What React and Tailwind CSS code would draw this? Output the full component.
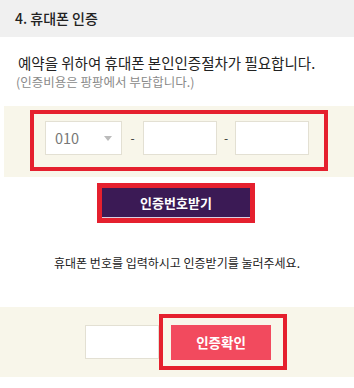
const font = { fontFamily: '"Noto Sans CJK KR", "Noto Sans", sans-serif' };

const PhoneBox = ({ className = '' }) => (
  <div className={`h-[34px] bg-white border border-[#e3e0d3] ${className}`} />
);

export default function App() {
  return (
    <div className="w-[354px] h-[388px] bg-white text-[#222] overflow-hidden" style={font}>
      {/* 헤더 */}
      <div className="h-[37px] bg-[#f0f0f0] px-[15px] flex items-center text-[14px] font-medium">
        4. 휴대폰 인증
      </div>

      {/* 안내문 */}
      <div className="pt-[16px] pl-[18px]">
        <p className="text-[14.5px] leading-[20px] text-[#222]">예약을 위하여 휴대폰 본인인증절차가 필요합니다.</p>
        <p className="-ml-[2px] text-[12.5px] leading-[18px] text-[#8a8a8a]">(인증비용은 팡팡에서 부담합니다.)</p>
      </div>

      {/* 번호 입력 */}
      <div className="mt-[15px] ml-[4px] h-[71px] bg-[#f8f6ea] pt-[4px]">
        <div className="ml-[26px] w-[298px] h-[61px] border-4 border-[#e5202e] pl-[11px] pt-[7px] flex items-start">
          <div className="w-[77px] h-[34px] bg-white border border-[#e3e0d3] flex items-center pl-[9px] pr-[9px]">
            <span className="text-[14.5px] text-[#777]">010</span>
            <span className="ml-auto w-0 h-0 border-l-[4px] border-r-[4px] border-t-[5px] border-l-transparent border-r-transparent border-t-[#bbb]" />
          </div>
          <span className="w-[21px] h-[34px] flex items-center justify-center text-[12px] text-[#333]">-</span>
          <PhoneBox className="w-[74px]" />
          <span className="w-[18px] h-[34px] flex items-center justify-center text-[12px] text-[#333]">-</span>
          <PhoneBox className="w-[74px]" />
        </div>
      </div>

      {/* 인증번호받기 */}
      <div className="mt-[6px] flex justify-center pr-[2px]">
        <div className="w-[158px] h-[40px] border-[5px] border-[#e5202e]">
          <button className="w-full h-full bg-[#3b1a55] border-b border-[#d9cfe0] text-white text-[13px] font-bold flex items-center justify-center">
            인증번호받기
          </button>
        </div>
      </div>

      <p className="mt-[31px] text-center text-[12px] leading-[18px] text-[#222]">
        휴대폰 번호를 입력하시고 인증받기를 눌러주세요.
      </p>

      {/* 인증확인 */}
      <div className="mt-[35px] h-[70px] bg-[#f8f6ea] flex items-start pt-[7px] pl-[85px]">
        <div className="mt-[11px] w-[74px] h-[34px] bg-white border border-[#e3e0d3]" />
        <div className="w-[128px] h-[56px] border-4 border-[#e5202e] pl-[8px] pt-[7px]">
          <button className="w-[100px] h-[35px] bg-[#f24a5e] text-white text-[13.5px] font-bold flex items-center justify-center">
            인증확인
          </button>
        </div>
      </div>
    </div>
  );
}
